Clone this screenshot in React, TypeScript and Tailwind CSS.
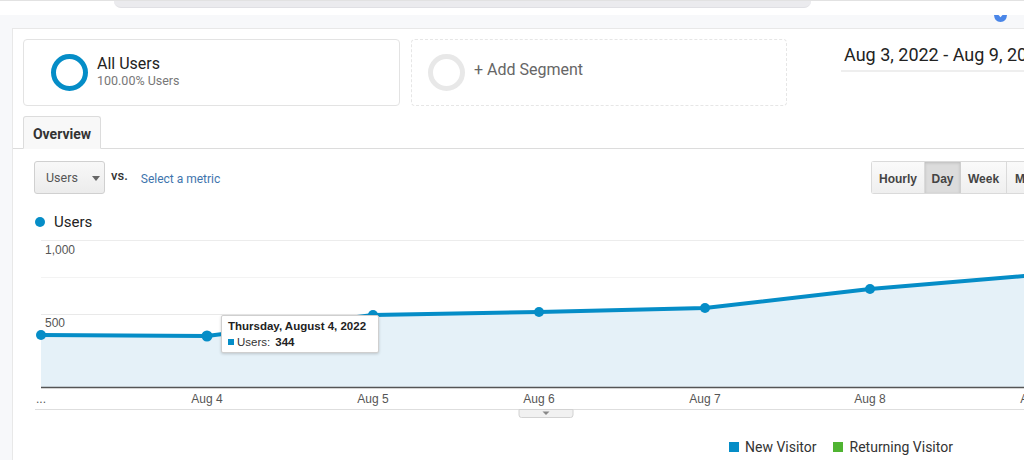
import React from 'react';

const BLUE = '#058dc7';

const POINTS: [number, number][] = [
  [28, 104],
  [194, 105],
  [360, 84],
  [526, 81],
  [692, 77],
  [857, 58],
  [1023, 44],
];

const X_LABELS = [
  { x: 28, t: '...' },
  { x: 194, t: 'Aug 4' },
  { x: 360, t: 'Aug 5' },
  { x: 526, t: 'Aug 6' },
  { x: 692, t: 'Aug 7' },
  { x: 857, t: 'Aug 8' },
  { x: 1023, t: 'Aug 9' },
];

const SegmentCard = ({ active }: { active?: boolean }) => (
  <div
    className={
      active
        ? 'flex shrink-0 items-center w-[377px] h-[67px] rounded-[4px] border border-[#e3e3e3] bg-white pl-[27px]'
        : 'flex shrink-0 items-center w-[376px] h-[67px] rounded-[4px] border border-dashed border-[#e6e6e6] bg-white pl-[16px]'
    }
  >
    <div
      className={
        active
          ? 'w-[37px] h-[37px] rounded-full border-[5px] border-[#058dc7]'
          : 'w-[37px] h-[37px] rounded-full border-[5px] border-[#e8e8e8]'
      }
    />
    {active ? (
      <div className="ml-[9px] -mt-[2px] leading-none">
        <div className="text-[16px] text-[#222]">All Users</div>
        <div className="text-[12.5px] text-[#777] mt-[3px]">100.00% Users</div>
      </div>
    ) : (
      <div className="ml-[9px] -mt-[6px] text-[16px] text-[#666]">+ Add Segment</div>
    )}
  </div>
);

const Chart = () => {
  const line = POINTS.map((p) => p.join(',')).join(' ');
  const area = `28,156 ${line} 1023,156`;
  return (
    <div className="relative h-[195px] -mt-[3px]">
      <svg width="1011" height="195" className="block">
        <line x1="28" x2="1011" y1="9.5" y2="9.5" stroke="#ececec" />
        <line x1="28" x2="1011" y1="46.5" y2="46.5" stroke="#f3f3f3" />
        <line x1="28" x2="1011" y1="83.5" y2="83.5" stroke="#e9e9e9" />
        <line x1="28" x2="1011" y1="120.5" y2="120.5" stroke="#f3f3f3" />
        <polygon points={area} fill="#e5f1f8" />
        <line x1="28" x2="1011" y1="156.5" y2="156.5" stroke="#555" strokeWidth="1.5" />
        <polyline points={line} fill="none" stroke={BLUE} strokeWidth="4" strokeLinejoin="round" />
        {POINTS.map(([x, y], i) => (
          <circle key={i} cx={x} cy={y} r={i === 1 ? 5.5 : 5} fill={BLUE} />
        ))}
        <text x="32" y="23" fontFamily="Liberation Sans, Arial, sans-serif" fontSize="12" fill="#555">
          1,000
        </text>
        <text x="32" y="96" fontFamily="Liberation Sans, Arial, sans-serif" fontSize="12" fill="#555">
          500
        </text>
        {X_LABELS.map((l) => (
          <text
            key={l.t}
            x={l.x}
            y="172"
            textAnchor="middle"
            fontFamily="Liberation Sans, Arial, sans-serif"
            fontSize="12"
            fill="#555"
          >
            {l.t}
          </text>
        ))}
        <line x1="22" x2="1011" y1="178.5" y2="178.5" stroke="#dedede" />
        <path d="M506 178.5 H560 V184 Q560 186.5 557.5 186.5 H508.5 Q506 186.5 506 184 Z" fill="#f1f1f1" stroke="#d2d2d2" />
        <path d="M529.5 180.5 H536.5 L533 184 Z" fill="#888" />
      </svg>

      {/* tooltip */}
      <div className="absolute left-[208px] top-[84px] w-[158px] h-[38px] bg-white border border-[#cfcfcf] rounded-[2px] shadow-[0_1px_3px_rgba(0,0,0,0.18)] px-[6px] pt-[3px] font-['Liberation_Sans',Arial,sans-serif] text-[11.5px] leading-[15px] text-[#222] whitespace-nowrap">
        <div className="font-bold">Thursday, August 4, 2022</div>
        <div className="flex items-center mt-[1px]">
          <span className="w-[6px] h-[6px] bg-[#058dc7] mr-[3px]" />
          <span className="text-[#333]">Users:</span>
          <span className="font-bold ml-[5px]">344</span>
        </div>
      </div>
    </div>
  );
};

export default function App() {
  return (
    <div className="w-[1024px] h-[460px] overflow-hidden bg-white font-['Roboto',sans-serif]">
      {/* browser strip */}
      <div className="h-[15px] border-t border-[#e2e2e2] bg-white">
        <div className="ml-[114px] w-[697px] h-[7px] bg-[#ebebee] rounded-b-[7px] border-b border-[#e0e0e4]" />
      </div>
      <div className="h-[13px] bg-[#f7f8fa] flex justify-end pr-[17px]">
        <svg width="13" height="7" viewBox="0 0 13 7" className="block">
          <path d="M0 0 H4.5 L6.5 2.2 L8.5 0 H13 Q12.5 7 6.5 7 Q0.5 7 0 0 Z" fill="#4a86e8" />
        </svg>
      </div>

      <div className="flex">
        <div className="w-[12px] h-[432px] bg-[#f7f8fa]" />
        <div className="flex-1 min-w-0 border-l border-t border-[#e8e8e8] bg-white">
          {/* segments */}
          <div className="flex items-start pt-[10px] pl-[10px]">
            <SegmentCard active />
            <div className="ml-[11px] shrink-0">
              <SegmentCard />
            </div>
            <div className="ml-[54px] mt-[2px] w-[240px] shrink-0 border-b-[2px] border-[#eeeeee] pl-[3px] pb-[2px] text-[18px] text-[#222] whitespace-nowrap">
              Aug 3, 2022 - Aug 9, 2022
            </div>
          </div>

          {/* tabs */}
          <div className="mt-[10px] pl-[10px] border-b border-[#dcdcdc] flex">
            <div className="w-[78px] h-[33px] -mb-px pt-[3px] border border-[#dcdcdc] border-b-[#f8f8f8] rounded-t-[3px] bg-[#f8f8f8] flex items-center justify-center text-[14px] font-bold text-[#333]">
              Overview
            </div>
          </div>

          {/* metric row */}
          <div className="flex items-start justify-between mt-[12px] pl-[21px] -mr-[47px]">
            <div className="flex items-start">
              <div className="w-[71px] h-[33px] pt-[2px] rounded-[3px] border border-[#d0d0d0] bg-gradient-to-b from-[#f8f8f8] to-[#ececec] flex items-center pl-[11px] text-[12.5px] text-[#555]">
                Users
                <span className="ml-[14px] w-0 h-0 border-l-[4px] border-r-[4px] border-t-[5px] border-l-transparent border-r-transparent border-t-[#666]" />
              </div>
              <div className="ml-[6px] mt-[5px] text-[13px] font-medium text-[#333]">vs.</div>
              <div className="ml-[13px] mt-[9px] text-[12px] text-[#3e74ad]">Select a metric</div>
            </div>
            <div className="flex shrink-0 w-[200px] h-[33px] border border-[#dadada] border-r-0 rounded-l-[3px] font-['Liberation_Sans',Arial,sans-serif] text-[12px] font-bold text-[#444]">
              <div className="w-[53px] pt-[2px] flex items-center justify-center bg-gradient-to-b from-[#fafafa] to-[#efefef] border-r border-[#dadada]">Hourly</div>
              <div className="w-[36px] pt-[2px] flex items-center justify-center bg-[#dcdcdc] shadow-[inset_0_1px_3px_rgba(0,0,0,0.15)] border-r border-[#cfcfcf]">Day</div>
              <div className="w-[46px] pt-[2px] flex items-center justify-center bg-gradient-to-b from-[#fafafa] to-[#efefef] border-r border-[#dadada]">Week</div>
              <div className="flex-1 pt-[2px] flex items-center pl-[8px] bg-gradient-to-b from-[#fafafa] to-[#efefef]">Month</div>
            </div>
          </div>

          {/* legend */}
          <div className="flex items-center mt-[17px] pl-[22px]">
            <span className="w-[10px] h-[10px] rounded-full bg-[#058dc7]" />
            <span className="ml-[9px] text-[15px] text-[#222]">Users</span>
          </div>

          <Chart />

          {/* visitor legend */}
          <div className="flex items-center mt-[11px] pl-[716px] text-[14px] text-[#333]">
            <span className="w-[10px] h-[10px] bg-[#058dc7]" />
            <span className="ml-[6px]">New Visitor</span>
            <span className="ml-[16px] w-[10px] h-[10px] bg-[#50b432]" />
            <span className="ml-[7px]">Returning Visitor</span>
          </div>
        </div>
      </div>
    </div>
  );
}
